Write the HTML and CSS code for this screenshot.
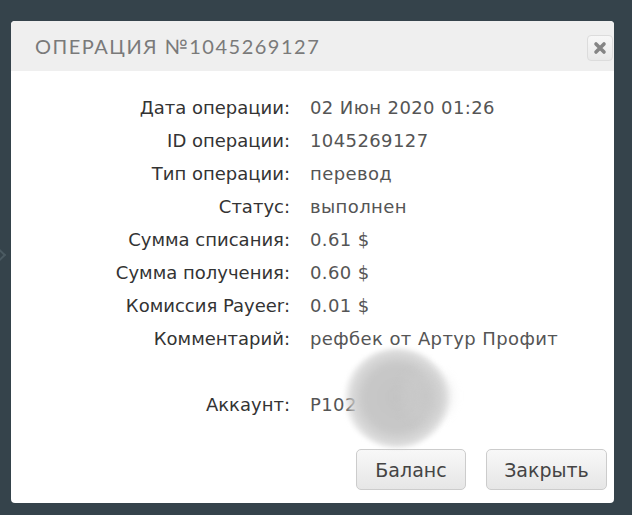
FILE: index.html
```html
<!DOCTYPE html>
<html lang="ru">
<head>
  <meta charset="UTF-8">
  <title>Операция</title>
  <link rel="stylesheet" href="styles.css">
</head>
<body>
  <div class="side-arrow"></div>
  <div class="modal">
    <div class="modal-header">
      <h2>ОПЕРАЦИЯ №1045269127</h2>
      <button class="close-x" aria-label="close">
        <svg width="14" height="14" viewBox="0 0 14 14">
          <path d="M3 3 L11 11 M11 3 L3 11" stroke="#858585" stroke-width="3.6" stroke-linecap="round"/>
        </svg>
      </button>
    </div>

    <div class="modal-body">
      <div class="info">
        <span class="label">Дата операции:</span><span class="value">02 Июн 2020 01:26</span>
        <span class="label">ID операции:</span><span class="value">1045269127</span>
        <span class="label">Тип операции:</span><span class="value">перевод</span>
        <span class="label">Статус:</span><span class="value">выполнен</span>
        <span class="label">Сумма списания:</span><span class="value">0.61 $</span>
        <span class="label">Сумма получения:</span><span class="value">0.60 $</span>
        <span class="label">Комиссия Payeer:</span><span class="value">0.01 $</span>
        <span class="label">Комментарий:</span><span class="value">рефбек от Артур Профит</span>
        <span class="label spacer"></span><span class="value spacer"></span>
        <span class="label">Аккаунт:</span><span class="value account">P102<span class="smudge"></span><span class="smudge two"></span></span>
      </div>
    </div>

    <div class="modal-footer">
      <button class="btn">Баланс</button>
      <button class="btn">Закрыть</button>
    </div>
  </div>
</body>
</html>
```

FILE: styles.css
```css
body {
  margin: 0;
  height: 515px;
  background-color: #35434b;
  font-family: 'DejaVu Sans', 'Noto Sans', sans-serif;
  overflow: hidden;
  position: relative;
}

.side-arrow {
  position: absolute;
  left: -6px;
  top: 250px;
  width: 8px;
  height: 8px;
  border-right: 2px solid #4b5a62;
  border-bottom: 2px solid #4b5a62;
  transform: rotate(-45deg);
}

.modal {
  margin: 21px 0 0 11px;
  width: 603px;
  height: 482px;
  background-color: #fff;
  border-radius: 4px;
  display: flex;
  flex-direction: column;
  overflow: hidden;
}

.modal-header {
  height: 50px;
  background-color: #efefef;
  display: flex;
  align-items: center;
  justify-content: space-between;
  padding: 0 1px 0 24px;
}

.modal-header h2 {
  margin: 0;
  font-family: 'Lato', sans-serif;
  font-size: 20px;
  font-weight: 400;
  color: #7a7a7a;
  letter-spacing: 1.5px;
}

.close-x {
  width: 26px;
  height: 26px;
  margin-top: 3px;
  border: 1px solid #dcdcdc;
  border-radius: 4px;
  background: linear-gradient(#f7f7f7, #e9e9e9);
  display: flex;
  align-items: center;
  justify-content: center;
  padding: 0;
}

.modal-body {
  padding-top: 20px;
  flex: 1;
}

.info {
  display: grid;
  grid-template-columns: 279px 1fr;
  column-gap: 20px;
  grid-auto-rows: 33px;
  align-items: center;
  font-size: 18px;
}

.label {
  text-align: right;
  color: #333;
}

.value {
  color: #555;
  letter-spacing: 0.4px;
}

.account {
  position: relative;
}

.smudge {
  position: absolute;
  left: 34px;
  top: -46px;
  width: 106px;
  height: 100px;
  border-radius: 50%;
  background: radial-gradient(circle, #c4c4c4 0%, #c8c8c8 45%, rgba(205, 205, 205, 0.75) 62%, rgba(255, 255, 255, 0) 75%);
  filter: blur(2px);
}

.smudge.two {
  left: 84px;
  top: -28px;
  width: 64px;
  height: 60px;
  background: radial-gradient(circle, rgba(200, 200, 200, 0.6) 0%, rgba(205, 205, 205, 0.4) 45%, rgba(255, 255, 255, 0) 70%);
  filter: blur(4px);
}

.modal-footer {
  display: flex;
  justify-content: flex-end;
  gap: 20px;
  padding: 0 7px 13px 0;
}

.btn {
  height: 41px;
  padding: 0;
  font-family: 'DejaVu Sans', sans-serif;
  font-size: 19px;
  color: #444;
  border: 1px solid #ccc;
  border-radius: 5px;
  background: linear-gradient(#f8f8f8, #e6e6e6);
}

.btn:first-child {
  width: 110px;
}

.btn:last-child {
  width: 121px;
}
```
